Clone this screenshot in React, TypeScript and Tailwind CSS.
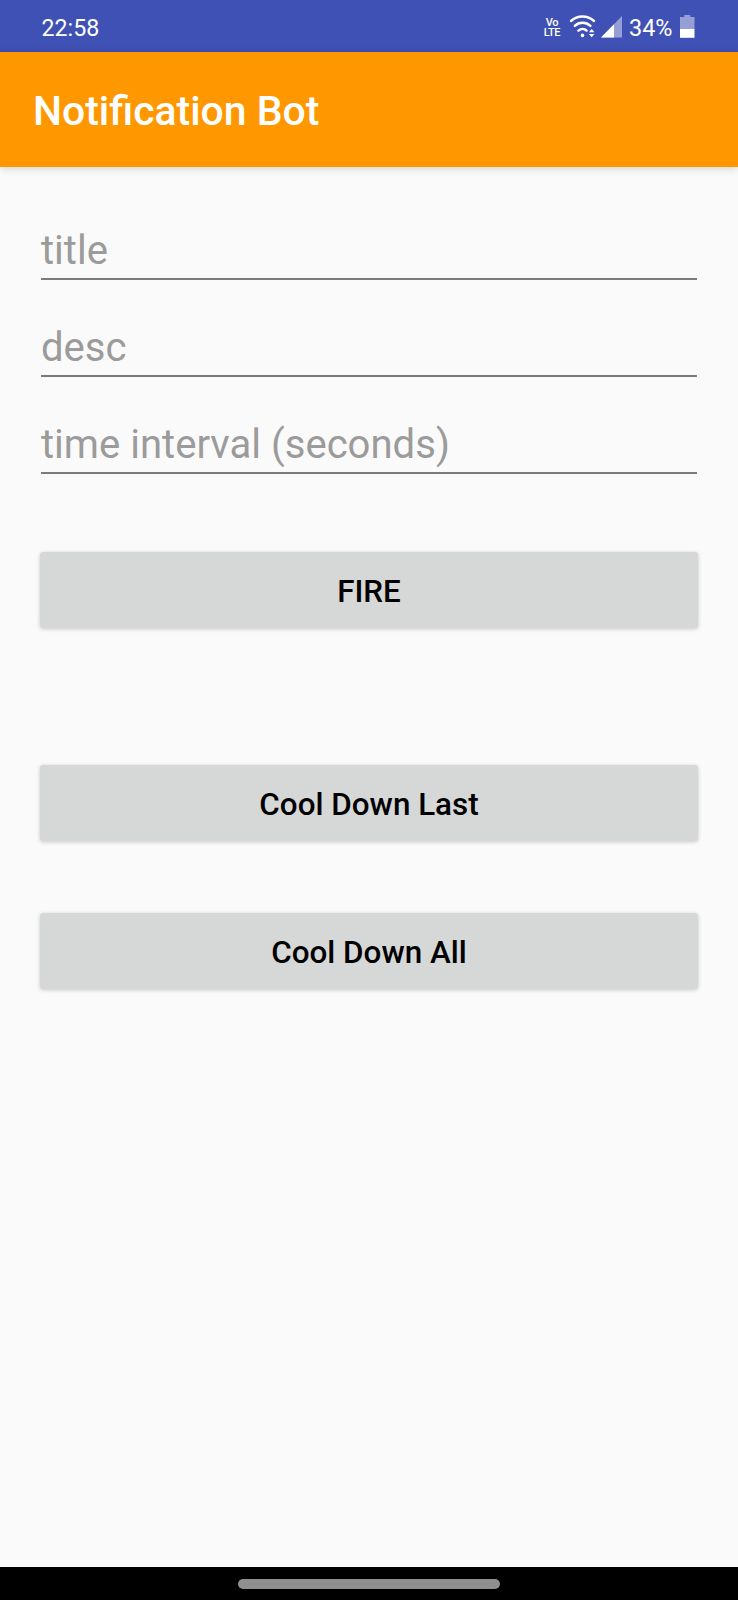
import React from "react";

function StatusBar() {
  return (
    <header className="flex h-[52px] shrink-0 items-center justify-between bg-[#3f51b5] pr-[43px] pl-[41.5px] text-white">
      <span className="pt-[3px] text-[23.2px] leading-7">22:58</span>
      <div className="flex h-full items-center">
        <span className="mr-[8px] flex flex-col items-center pt-[3px] text-[11px] leading-[10px] font-medium tracking-[-0.4px]">
          <span>Vo</span>
          <span>LTE</span>
        </span>
        <svg className="h-[52px] w-[56px]" viewBox="568 0 56 52" fill="none">
          <g stroke="white" strokeWidth="2.4" strokeLinecap="round">
            <path d="M571 21C577.5 15 587.5 15 594 21" />
            <path d="M574.8 25.9C579 21.8 586 21.8 590.4 25.9" />
            <path d="M578.4 30.6C581 28.3 584.4 28.3 586.6 30.6" />
          </g>
          <circle cx="582.5" cy="35.4" r="1.8" fill="white" />
          <path d="M588.9 32.2L591.7 29L594.5 32.2ZM588.9 34.1L591.7 37.3L594.5 34.1Z" fill="white" />
          <path d="M601 37.5L622 16V37.5Z" fill="white" fillOpacity="0.45" />
          <path d="M601 37.5L614 24.2V37.5Z" fill="white" />
        </svg>
        <span className="ml-[5px] pt-[3px] text-[23.4px] leading-7">34%</span>
        <svg className="ml-[7.5px] h-[52px] w-[15px]" viewBox="680 0 15 52">
          <path d="M684.3 15H690.3V17H694.5V29H680V17H684.3Z" fill="white" fillOpacity="0.45" />
          <path d="M680 29H694.5V37.8H680Z" fill="white" />
        </svg>
      </div>
    </header>
  );
}

function Field({ label }: { label: string }) {
  return (
    <label className="flex h-[97px] flex-col justify-end">
      <span className="pb-[3px] text-[40.1px] leading-[48px] text-[#9b9b9b]">{label}</span>
      <span className="h-[2px] bg-[#7a7a7a]" />
    </label>
  );
}

function ActionButton({ children }: { children: React.ReactNode }) {
  return (
    <button className="-mx-px flex h-[76px] items-center justify-center rounded-[3px] bg-[#d6d8d7] pt-[3px] text-[31.4px] leading-9 font-medium text-black shadow-[0_1px_4px_rgba(0,0,0,0.2)]">
      {children}
    </button>
  );
}

export default function App() {
  return (
    <div className="flex h-[1600px] w-[738px] flex-col bg-[#fafafa] font-['Roboto',sans-serif]">
      <StatusBar />
      <div className="z-10 flex h-[115px] shrink-0 items-center bg-[#ff9800] pt-[2px] pl-[33px] shadow-[0_1px_8px_rgba(0,0,0,0.18)]">
        <h1 className="text-[40.9px] leading-[48px] font-medium text-white">Notification Bot</h1>
      </div>
      <main className="flex grow flex-col px-[41px] pt-[16px]">
        <Field label="title" />
        <Field label="desc" />
        <Field label="time interval (seconds)" />
        <div className="flex flex-col pt-[78px]">
          <ActionButton>FIRE</ActionButton>
          <div className="mt-[137px] flex flex-col gap-[72px]">
            <ActionButton>Cool Down Last</ActionButton>
            <ActionButton>Cool Down All</ActionButton>
          </div>
        </div>
      </main>
      <footer className="flex h-[33px] shrink-0 justify-center bg-black pt-[12px]">
        <span className="h-[10px] w-[262px] rounded-full bg-[#8f8f8f]" />
      </footer>
    </div>
  );
}
